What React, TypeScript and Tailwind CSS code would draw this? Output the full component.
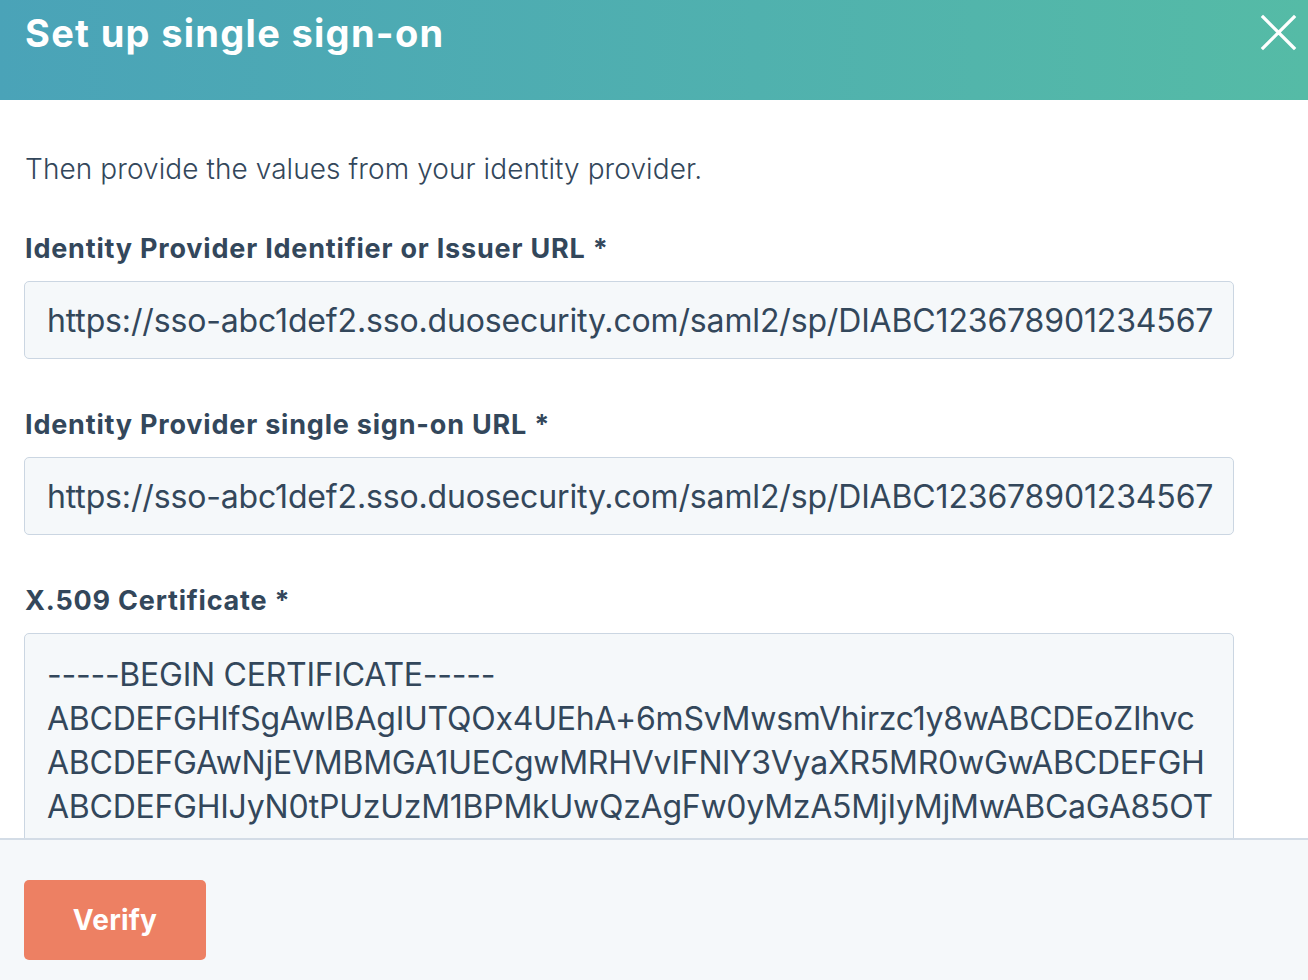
import React from "react";

const certLines = [
  "-----BEGIN CERTIFICATE-----",
  "ABCDEFGHIfSgAwIBAgIUTQOx4UEhA+6mSvMwsmVhirzc1y8wABCDEoZIhvc",
  "ABCDEFGAwNjEVMBMGA1UECgwMRHVvIFNlY3VyaXR5MR0wGwABCDEFGH",
  "ABCDEFGHIJyN0tPUzUzM1BPMkUwQzAgFw0yMzA5MjIyMjMwABCaGA85OT",
];

const url = "https://sso-abc1def2.sso.duosecurity.com/saml2/sp/DIABC123678901234567";

function Label({ children, className = "" }: { children: React.ReactNode; className?: string }) {
  return (
    <div className={`text-[27px] leading-[33px] font-bold tracking-[0.8px] text-[#33475b] ${className}`}>
      {children}
    </div>
  );
}

function Field({ value }: { value: string }) {
  return (
    <div className="mt-[16px] h-[78px] w-[1210px] rounded-[5px] border border-[#cbd6e2] bg-[#f5f8fa] pl-[22px] pr-[20px] flex items-center overflow-hidden">
      <div className="whitespace-nowrap overflow-hidden text-[32px] leading-[39px] tracking-[-0.15px] text-[#33475b]">
        {value}
      </div>
    </div>
  );
}

export default function App() {
  return (
    <div className="h-[980px] w-full flex flex-col overflow-hidden bg-white font-[Inter,sans-serif]">
      <header className="h-[100px] shrink-0 bg-gradient-to-r from-[#4aa3b8] to-[#55bba6] flex items-start justify-between pl-[25px] pr-[10px] pt-[10px]">
        <h1 className="text-[38px] leading-[46px] font-bold tracking-[1.3px] text-white">Set up single sign-on</h1>
        <svg className="mt-[2px]" width="40" height="40" viewBox="0 0 40 40" fill="none">
          <path d="M5 5 L36 36 M36 5 L5 36" stroke="white" strokeWidth="3.2" strokeLinecap="square" />
        </svg>
      </header>

      <main className="flex-1 overflow-hidden px-[24px] pt-[52px]">
        <p className="text-[28px] leading-[34px] font-light tracking-[0.08px] text-[#33475b] pl-[1px]">
          Then provide the values from your identity provider.
        </p>

        <Label className="mt-[46px] pl-[1px]">Identity Provider Identifier or Issuer URL *</Label>
        <Field value={url} />

        <Label className="mt-[49px] pl-[1px]">Identity Provider single sign-on URL *</Label>
        <Field value={url} />

        <Label className="mt-[49px] pl-[1px]">X.509 Certificate *</Label>
        <div className="mt-[16px] h-[260px] w-[1210px] rounded-[5px] border border-[#cbd6e2] bg-[#f5f8fa] pl-[22px] pr-[16px] pt-[19px] overflow-hidden">
          {certLines.map((l, i) => (
            <div key={i} className="whitespace-nowrap text-[32px] leading-[44px] tracking-[-0.25px] text-[#33475b]">
              {l}
            </div>
          ))}
        </div>
      </main>

      <footer className="h-[142px] shrink-0 border-t-2 border-[#d3dce6] bg-[#f5f8fa] px-[24px] pt-[40px]">
        <button className="h-[80px] w-[182px] rounded-[5px] bg-[#ed8063] text-white text-[28px] font-bold tracking-[0.2px] flex items-center justify-center">
          Verify
        </button>
      </footer>
    </div>
  );
}
